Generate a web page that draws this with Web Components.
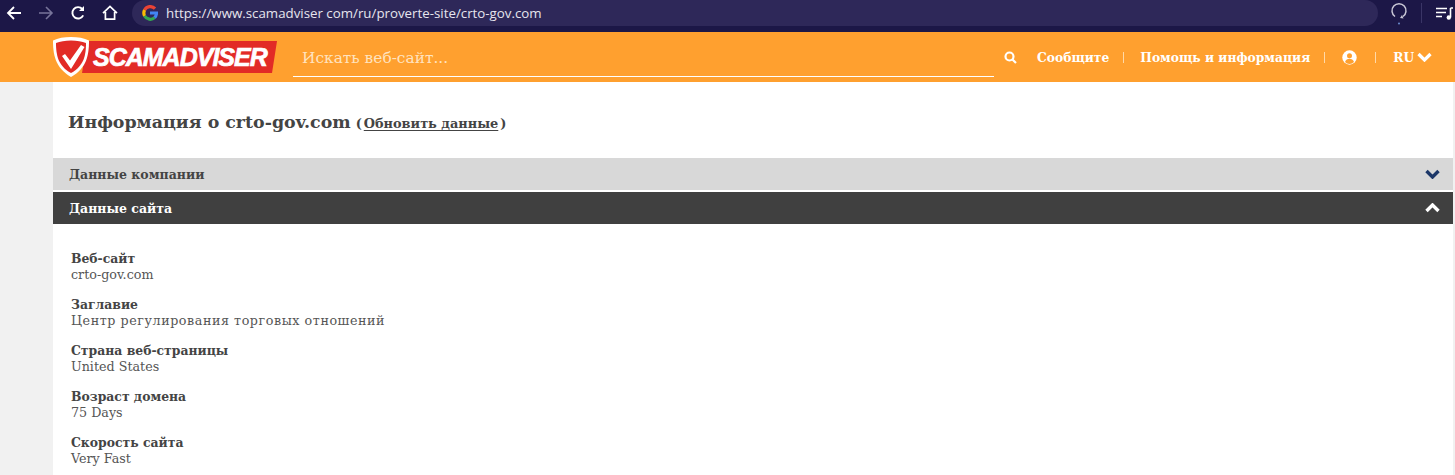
<!DOCTYPE html>
<html lang="ru">
<head>
<meta charset="utf-8">
<title>Scamadviser</title>
<style>
  html, body { margin: 0; padding: 0; background: #f1f1f1; height: 475px; overflow: hidden; }
  body { font-family: "DejaVu Serif", serif; color: #444; }
</style>
</head>
<body>
<browser-bar url="https://www.scamadviser com/ru/proverte-site/crto-gov.com"></browser-bar>
<site-header></site-header>
<info-page domain="crto-gov.com">
  <accordion-bar>Данные компании</accordion-bar>
  <accordion-bar open>Данные сайта</accordion-bar>
  <info-list>
    <info-item label="Веб-сайт">crto-gov.com</info-item>
    <info-item label="Заглавие" style="letter-spacing:.56px">Центр регулирования торговых отношений</info-item>
    <info-item label="Страна веб-страницы">United States</info-item>
    <info-item label="Возраст домена">75 Days</info-item>
    <info-item label="Скорость сайта">Very Fast</info-item>
  </info-list>
</info-page>

<script>
class BrowserBar extends HTMLElement {
  constructor() {
    super();
    this.attachShadow({ mode: "open" });
    this.shadowRoot.innerHTML = `
    <style>
      :host { display: flex; align-items: center; height: 32px; background: #1c1747; box-sizing: border-box; padding: 0 0 6px 6px; }
      svg { display: block; flex: none; }
      .nav { display: flex; align-items: center; gap: 16px; width: 126px; flex: none; }
      .pill { display: flex; align-items: center; gap: 8px; width: 1246px; height: 26px; flex: none; box-sizing: border-box; padding-left: 10px;
        background: #2e2859; border-radius: 13px; color: #e6e5ee; font: 13.3px "Open Sans", "Liberation Sans", sans-serif; white-space: nowrap; }
      .right { display: flex; align-items: center; margin-left: 11px; }
      .sep { width: 1px; height: 20px; background: #3a3566; margin: 0 14px 0 12px; }
    </style>
    <div class="nav">
      <svg width="16" height="16" viewBox="0 0 16 16" fill="none" stroke="#fff" stroke-width="1.8"><path d="M15 8H2M8 2 2 8l6 6"/></svg>
      <svg width="16" height="16" viewBox="0 0 16 16" fill="none" stroke="#77749a" stroke-width="1.6"><path d="M1 8h13M8 2l6 6-6 6"/></svg>
      <svg width="16" height="16" viewBox="0 0 16 16" fill="none" stroke="#fff" stroke-width="1.9"><path d="M13.2 10.4A5.7 5.7 0 1 1 12.3 4"/><path d="M14 1v5H9z" fill="#fff" stroke="none"/></svg>
      <svg width="16" height="16" viewBox="0 0 16 16" fill="none" stroke="#fff" stroke-width="1.7"><path d="M1 8.200 8 1.500l7 6.700M3.400 7v7.200h9.200V7"/></svg>
    </div>
    <div class="pill">
      <svg width="16" height="16" viewBox="0 0 16 16" fill="none" stroke-width="3.2">
        <path d="M13 3.600A6.500 6.500 0 0 0 2.600 5" stroke="#ea4335"/>
        <path d="M2.600 5a6.500 6.500 0 0 0 0 6" stroke="#fbbc05"/>
        <path d="M2.600 11a6.500 6.500 0 0 0 10 1.600" stroke="#34a853"/>
        <path d="M12.600 12.600A6.500 6.500 0 0 0 14.500 8H8" stroke="#4285f4"/>
      </svg>
      <span id="url"></span>
    </div>
    <div class="right">
      <svg width="20" height="24" viewBox="0 0 20 24" fill="none" stroke="#c9c8d6" stroke-width="1.5"><path d="M6 15.500a7 7 0 1 1 8 0"/><path d="M13 14l1.500 3.500-3.500-.5z" fill="#c9c8d6" stroke="none"/><circle cx="10" cy="22.500" r="1" fill="#6b8cd0" stroke="none"/></svg>
      <span class="sep"></span>
      <svg width="17" height="13" viewBox="0 0 17 13" fill="none" stroke="#fff" stroke-width="1.6"><path d="M0 1.500h11M0 5.500h10M0 9.500h6"/><path d="M14.500 1v9.500M14.500 1H17"/><circle cx="12.800" cy="10.500" r="2.200" fill="#fff" stroke="none"/></svg>
    </div>`;
  }
  connectedCallback() {
    this.shadowRoot.getElementById("url").textContent = this.getAttribute("url");
  }
}
customElements.define("browser-bar", BrowserBar);

class SiteHeader extends HTMLElement {
  constructor() {
    super();
    this.attachShadow({ mode: "open" });
    this.shadowRoot.innerHTML = `
    <style>
      :host { display: flex; align-items: center; height: 50px; background: #ffa02f; box-sizing: border-box; padding-left: 52px; color: #fff;
        font: bold 12.3px "DejaVu Serif", serif; white-space: nowrap; }
      svg { display: block; flex: none; }
      .logo { position: relative; display: flex; width: 225px; height: 42px; flex: none; }
      .logo b { position: absolute; left: 41px; top: 8px; font: italic bold 25px/26px "Liberation Sans", sans-serif; letter-spacing: -1px; -webkit-text-stroke: .7px #fff; }
      .search { width: 701px; height: 34px; margin: 6px 0 0 16px; box-sizing: border-box; border-bottom: 1px solid #fff; flex: none;
        font: 15.4px/30px "DejaVu Serif", serif; color: #ffe3bf; padding-left: 9px; }
      .links { display: flex; align-items: center; margin-left: 10px; }
      .sep { width: 1px; height: 11px; background: #ffd9a8; margin: 0 16px 0 14px; }
    </style>
    <div class="logo">
      <svg width="225" height="42" viewBox="0 0 225 42">
        <path d="M35 5H225L220 37H30z" fill="#e22b26"/>
        <path d="M19 1C12 1 6 2 1 4.500c0 14 2 27 18 36.500C35 32 37 18.500 37 4.500 32 2 26 1 19 1z" fill="#fff"/>
        <path d="M19 4.500C13 4.500 8 5.500 4 7c0 12 2 23 15 30C32 30 34 19 34 7 30 5.500 25 4.500 19 4.500z" fill="#e22b26"/>
        <path d="M10 20l3-2 5 6.500L29 9l3.500 2L19 33z" fill="#fff"/>
      </svg>
      <b>SCAMADVISER</b>
    </div>
    <div class="search">Искать веб-сайт...</div>
    <div class="links">
      <svg width="13" height="13" viewBox="0 0 13 13" fill="none" stroke="#fff" stroke-width="2.200" style="margin-right:20px"><circle cx="5.500" cy="5.500" r="4"/><path d="M8.500 8.500 12 12"/></svg>
      <span>Сообщите</span><span class="sep"></span>
      <span>Помощь и информация</span><span class="sep" style="margin-right:17px"></span>
      <svg width="15" height="15" viewBox="0 0 15 15"><circle cx="7.500" cy="7.500" r="7.200" fill="#fff"/><circle cx="7.500" cy="5.800" r="2.500" fill="#ffa02f"/><path d="M3 12c.8-2.600 2.500-3.300 4.500-3.300S11.200 9.400 12 12a6 6 0 0 1-9 0z" fill="#ffa02f"/></svg>
      <span class="sep" style="margin:0 17px 0 18px"></span>
      <span>RU</span>
      <svg width="15" height="10" viewBox="0 0 15 10" fill="none" stroke="#fff" stroke-width="3.200" style="margin-left:3px"><path d="M1.500 2 7.500 8 13.500 2"/></svg>
    </div>`;
  }
}
customElements.define("site-header", SiteHeader);

class InfoPage extends HTMLElement {
  constructor() {
    super();
    this.attachShadow({ mode: "open" });
    this.shadowRoot.innerHTML = `
    <style>
      :host { display: block; margin: 0 2px 0 53px; background: #fff; height: 393px; overflow: hidden; }
      h1 { margin: 0; height: 76px; box-sizing: border-box; padding: 28px 0 0 15px; font: bold 17.4px/24px "DejaVu Serif", serif; color: #444; white-space: nowrap; }
      small { font-size: 12.9px; font-weight: bold; margin-left: 5px; }
      u { margin: 0 2px; text-underline-offset: 2px; }
    </style>
    <h1><span id="title"></span><small>(<u>Обновить данные</u>)</small></h1>
    <slot></slot>`;
  }
  connectedCallback() {
    this.shadowRoot.getElementById("title").textContent = "Информация о " + this.getAttribute("domain");
  }
}
customElements.define("info-page", InfoPage);

class AccordionBar extends HTMLElement {
  constructor() {
    super();
    this.attachShadow({ mode: "open" });
    this.shadowRoot.innerHTML = `
    <style>
      :host { display: flex; align-items: center; justify-content: space-between; height: 32px; margin-bottom: 2px; box-sizing: border-box; padding: 0 13px 0 16px;
        background: #d8d8d8; color: #444; font: bold 12.5px "DejaVu Serif", serif; }
      :host([open]) { background: #404040; color: #fff; }
      svg { display: block; stroke: #1c3768; }
      :host([open]) svg { stroke: #fff; transform: rotate(180deg); }
    </style>
    <slot></slot>
    <svg width="15" height="10" viewBox="0 0 15 10" fill="none" stroke-width="3.400"><path d="M1.500 2 7.500 8 13.500 2"/></svg>`;
  }
}
customElements.define("accordion-bar", AccordionBar);

class InfoList extends HTMLElement {
  constructor() {
    super();
    this.attachShadow({ mode: "open" });
    this.shadowRoot.innerHTML = `
    <style>
      :host { display: flex; flex-direction: column; gap: 14px; padding: 25px 0 0 18px; }
    </style>
    <slot></slot>`;
  }
}
customElements.define("info-list", InfoList);

class InfoItem extends HTMLElement {
  constructor() {
    super();
    this.attachShadow({ mode: "open" });
    this.shadowRoot.innerHTML = `
    <style>
      :host { display: block; font: 12.7px/16px "DejaVu Serif", serif; color: #555; white-space: nowrap; }
      div { font: bold 12.4px/16px "DejaVu Serif", serif; letter-spacing: 0; color: #444; }
    </style>
    <div id="label"></div>
    <slot></slot>`;
  }
  connectedCallback() {
    this.shadowRoot.getElementById("label").textContent = this.getAttribute("label");
  }
}
customElements.define("info-item", InfoItem);
</script>
</body>
</html>
